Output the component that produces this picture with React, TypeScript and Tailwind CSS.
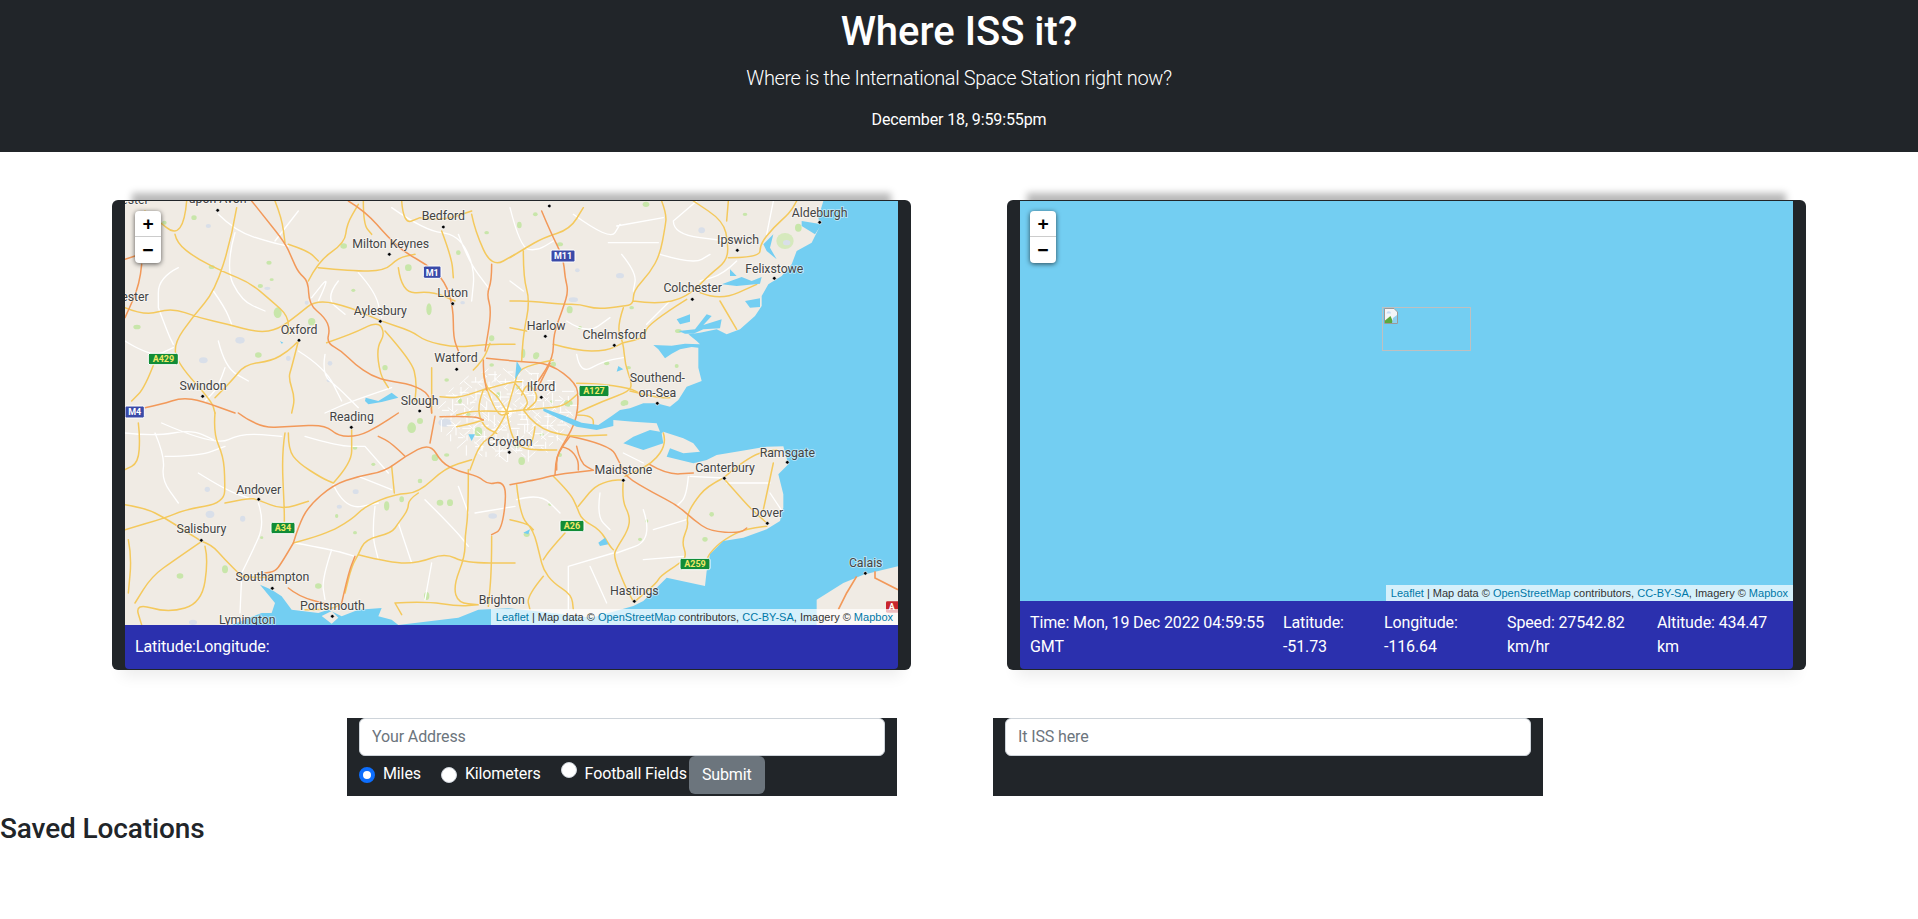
import React from 'react';

// Road and coast coordinates are in 3x map pixels, one list per map quadrant.
type Line = number[];

const yellow: Record<string, Line[]> = {
  q1: [
    [335, 20, 320, 110, 270, 270, 205, 345, 145, 430, 160, 490, 260, 600, 270, 636],
    [150, 100, 155, 125, 210, 170, 300, 215, 375, 245, 440, 300, 490, 345, 490, 400],
    [0, 320, 60, 345, 140, 320, 220, 350, 310, 370, 400, 395, 460, 385, 520, 340, 575, 295, 680, 320, 765, 360, 860, 390, 900, 420, 990, 440, 1080, 430, 1170, 430],
    [550, 240, 580, 180, 660, 125, 665, 70, 700, 10],
    [580, 200, 680, 210, 780, 210, 820, 170, 870, 160],
    [490, 130, 550, 150, 580, 180],
    [520, 420, 500, 500, 490, 530, 510, 590, 500, 636],
    [270, 590, 320, 540, 360, 490, 440, 480, 490, 450, 520, 420],
    [605, 425, 680, 400, 760, 360, 780, 400, 755, 440, 765, 520, 790, 560],
    [780, 390, 860, 480, 875, 540, 870, 600],
    [950, 90, 980, 170, 985, 230],
    [820, 200, 830, 280, 920, 270, 990, 300],
    [1040, 40, 1050, 90, 1100, 200, 1170, 160],
    [885, 50, 950, 60, 1040, 30],
    [185, 0, 180, 60, 150, 100, 100, 60, 60, 30],
    [90, 480, 60, 560, 20, 600],
    [920, 500, 920, 636],
    [450, 0, 470, 50, 480, 125],
    [830, 0, 835, 70, 885, 50],
    [715, 0, 715, 70, 740, 100],
  ],
  q2: [
    [455, 0, 470, 40, 465, 80, 450, 160, 420, 215, 370, 270, 370, 310, 340, 315, 260, 325, 210, 310, 160, 310, 60, 300, 0, 300],
    [40, 150, 40, 230, 60, 300, 40, 400, 35, 480],
    [0, 170, 40, 145, 100, 110, 180, 85, 220, 20],
    [370, 300, 440, 310, 530, 290, 600, 220, 650, 180, 655, 130, 640, 60, 550, 0],
    [655, 0, 650, 60],
    [655, 170, 750, 170, 750, 130, 790, 80, 840, 35, 860, 0],
    [570, 275, 630, 300, 740, 250],
    [630, 300, 680, 385],
    [530, 295, 410, 370, 405, 410, 340, 425],
    [340, 320, 320, 380, 340, 425, 345, 490, 365, 545, 360, 570, 280, 600, 200, 636],
    [130, 430, 200, 450, 290, 450, 340, 425],
    [0, 380, 50, 390],
    [360, 570, 440, 590, 480, 590],
  ],
  q3: [
    [270, 0, 265, 60, 295, 130, 300, 200, 298, 270, 180, 290, 120, 315, 0, 350],
    [0, 275, 60, 285, 120, 315, 190, 360, 230, 385],
    [300, 270, 370, 255, 400, 260, 470, 290, 550, 265],
    [480, 60, 470, 120, 478, 290, 478, 330],
    [490, 60, 490, 110, 520, 150, 590, 195, 625, 210],
    [625, 210, 680, 150, 680, 80, 680, 50],
    [230, 385, 260, 395, 300, 440, 350, 490],
    [230, 385, 150, 440, 80, 490, 30, 570],
    [240, 400, 250, 440, 230, 570, 130, 600, 30, 570, 50, 636],
    [10, 380, 20, 430, 10, 540],
    [505, 390, 600, 365, 680, 320, 720, 280, 810, 243, 880, 240, 960, 165, 1040, 140],
    [800, 160, 808, 240],
    [880, 240, 850, 260, 850, 290, 820, 330, 800, 360, 720, 380, 700, 425, 680, 460, 660, 540],
    [700, 425, 800, 450, 880, 450, 960, 420, 1020, 450, 1170, 450],
    [1030, 170, 1030, 300, 1020, 370, 1020, 430, 985, 520, 1000, 570, 1060, 575],
    [1100, 370, 1100, 470, 1090, 580],
    [810, 570, 900, 565, 1000, 580, 1060, 575],
    [810, 570, 830, 605],
    [350, 490, 400, 495, 440, 490],
    [40, 30, 45, 70, 40, 150, 0, 170],
    [540, 590, 620, 590, 650, 570],
  ],
  q4: [
    [640, 195, 590, 220, 550, 270, 530, 310, 535, 340, 515, 385, 530, 430, 510, 450, 450, 490, 440, 510, 375, 565],
    [640, 195, 680, 240, 720, 285, 770, 330],
    [790, 150, 775, 220, 760, 290],
    [640, 195, 720, 125, 800, 110],
    [340, 200, 335, 260, 360, 310, 355, 350, 320, 405, 310, 430, 345, 520, 370, 565],
    [20, 215, 30, 310, 70, 350, 90, 430, 100, 470, 130, 510, 185, 545, 190, 590],
    [165, 360, 120, 410, 100, 440],
    [130, 190, 180, 240, 200, 280, 215, 320, 270, 350, 300, 400, 310, 410],
    [340, 200, 270, 200, 205, 280],
    [460, 60, 470, 90, 430, 150, 345, 190],
    [0, 320, 50, 330, 70, 350],
    [100, 490, 50, 550, 60, 590],
    [770, 340, 710, 345, 640, 380, 600, 420, 590, 440],
  ],
  // London, from its own close-up
  lon: [
    [200, 215, 225, 130, 235, 90, 290, 70, 340, 60],
    [200, 215, 175, 170, 140, 145, 130, 100],
    [140, 145, 60, 175, 0, 170],
    [200, 215, 110, 210, 50, 225],
    [200, 215, 300, 205, 370, 200, 415, 160],
    [250, 210, 285, 260, 380, 290, 500, 285],
    [200, 215, 170, 280, 120, 310, 90, 390],
    [200, 215, 210, 280, 240, 325, 300, 330, 350, 330],
    [285, 260, 280, 300, 265, 320],
    [130, 240, 100, 250, 50, 260],
    [130, 150, 215, 125, 245, 125],
    [130, 150, 110, 200, 130, 260, 170, 280],
    [225, 130, 270, 180, 250, 210],
    [140, 145, 170, 230, 205, 220],
    [245, 165, 260, 120, 300, 175, 260, 210],
    [410, 130, 470, 130, 570, 145, 600, 160],
    [410, 225, 460, 225, 460, 265],
    [100, 90, 130, 60, 150, 10],
  ],
};

const orange: Record<string, Line[]> = {
  q1: [
    [380, 0, 420, 50, 480, 125, 500, 170, 520, 215, 550, 240, 552, 310, 600, 350, 615, 385, 605, 425, 650, 450, 690, 490, 740, 525, 790, 540, 860, 550, 915, 580, 920, 636],
    [670, 0, 720, 30, 790, 110, 840, 155, 905, 190, 960, 240, 985, 320, 985, 410, 1000, 450],
    [60, 620, 110, 610, 170, 590, 230, 600, 330, 636],
    [50, 190, 45, 250, 0, 350],
    [0, 175, 30, 165],
    [1100, 190, 1100, 240, 1085, 280, 1100, 330, 1080, 450],
  ],
  q2: [
    [95, 30, 120, 90, 160, 170, 165, 230, 175, 270, 160, 320, 130, 400, 130, 470, 85, 540],
  ],
  q3: [
    [340, 0, 400, 45, 500, 40, 600, 35, 640, 70, 700, 70, 760, 40, 820, 0],
    [505, 390, 520, 340, 550, 280, 625, 215, 700, 190, 780, 175, 840, 130, 915, 90, 950, 150, 1000, 175, 1060, 190, 1090, 215, 1130, 205, 1145, 240, 1130, 350, 1100, 365],
    [505, 390, 470, 450, 450, 475, 420, 480],
    [490, 525, 520, 550, 610, 575],
    [650, 570, 670, 480, 690, 430],
    [840, 130, 800, 90, 760, 70],
    [915, 90, 930, 10],
  ],
  q4: [
    [0, 215, 80, 200, 135, 185, 250, 172],
    [180, 70, 140, 120, 135, 185],
    [180, 70, 300, 95, 330, 150, 345, 190, 430, 240, 500, 275, 550, 320, 600, 355, 690, 360, 710, 345],
    [420, 155, 470, 185, 550, 180],
    [200, 100, 210, 150, 250, 172],
  ],
  lon: [
    [140, 55, 240, 65, 330, 70, 410, 130, 415, 180, 410, 230, 395, 270, 365, 320, 350, 350, 350, 390],
    [130, 60, 130, 100, 140, 150],
    [330, 70, 310, 110, 290, 150],
    [0, 230, 100, 228, 130, 240],
    [365, 320, 390, 325, 415, 360, 415, 390],
  ],
};

const white: Record<string, Line[]> = {
  q1: [
    [280, 40, 330, 90, 440, 125, 490, 135],
    [265, 270, 300, 320, 320, 370],
    [580, 300, 620, 215, 560, 290],
    [700, 215, 750, 270, 770, 350],
    [100, 320, 130, 400, 145, 430],
    [0, 420, 80, 470, 145, 440],
    [300, 500, 280, 560, 240, 600],
    [520, 450, 600, 500, 650, 600],
    [600, 460, 590, 520, 640, 560, 700, 620],
    [800, 20, 900, 90, 1000, 100, 1050, 200, 1040, 300],
    [520, 30, 450, 120],
    [1000, 100, 1030, 180, 1090, 260],
    [330, 95, 300, 200, 350, 300, 420, 330],
    [640, 240, 600, 290, 660, 340],
    [280, 420, 300, 500, 370, 540],
    [160, 200, 100, 230, 100, 320],
    [800, 560, 680, 600, 600, 636],
  ],
  q2: [
    [320, 75, 460, 50],
    [295, 125, 445, 125],
    [335, 160, 380, 215, 370, 270],
    [490, 60, 490, 100, 650, 120],
    [450, 160, 550, 190, 600, 160],
    [0, 20, 30, 140, 80, 150, 130, 120],
    [190, 40, 300, 120, 330, 70],
    [200, 460, 210, 520, 280, 480, 340, 470],
    [40, 270, 0, 240],
    [410, 370, 480, 300],
    [560, 0, 490, 60],
    [680, 180, 640, 220, 570, 240],
    [170, 360, 230, 400, 300, 350],
    [770, 100, 790, 0],
  ],
  q3: [
    [90, 60, 120, 130, 110, 200, 160, 270],
    [0, 60, 90, 70, 200, 50, 265, 80],
    [120, 130, 220, 130, 300, 100],
    [220, 180, 300, 230, 370, 255],
    [400, 270, 420, 330, 380, 420, 350, 480],
    [350, 490, 345, 600],
    [510, 390, 620, 410, 690, 430],
    [620, 410, 590, 500, 600, 560],
    [625, 215, 660, 290, 760, 270],
    [700, 190, 800, 230],
    [900, 260, 990, 350, 1030, 400],
    [820, 330, 860, 450],
    [920, 450, 900, 560],
    [720, 100, 790, 180],
    [1050, 300, 1170, 280],
    [110, 30, 270, 100, 350, 60, 470, 70],
    [540, 70, 640, 100, 720, 100],
    [750, 280, 740, 360, 760, 440],
    [1000, 220, 1030, 300],
  ],
  q4: [
    [535, 190, 530, 250, 500, 280],
    [640, 195, 540, 190],
    [400, 290, 430, 380, 320, 420],
    [530, 320, 430, 350],
    [175, 460, 310, 420],
    [175, 460, 175, 590],
    [240, 460, 290, 570],
    [20, 260, 90, 240, 150, 300],
    [650, 210, 780, 210],
    [820, 300, 780, 240],
    [400, 440, 520, 430],
    [270, 240, 260, 310, 300, 350],
    [340, 120, 400, 150],
  ],
  lon: [],
};

// London streets: a thin web spread evenly with the golden angle
const londonStreets = Array.from({ length: 230 }, (_, i) => {
  const a = i * 2.39996;
  const r = Math.sqrt(i / 230);
  const x = 200 + Math.cos(a) * r * 200;
  const y = 215 + Math.sin(a) * r * 135;
  const dir = i % 4 === 0 ? 0 : i % 4 === 1 ? 1.57 : i % 4 === 2 ? 0.7 : 2.4;
  const len = 16 + (i % 5) * 5;
  return `M${x.toFixed(0)} ${y.toFixed(0)}L${(x + Math.cos(dir) * len).toFixed(0)} ${(y + Math.sin(dir) * len).toFixed(0)}`;
}).join('');

const greens: [number, number, number, number][] = [
  [207, 50, 8, 7], [118, 65, 7, 6], [432, 185, 8, 6], [458, 335, 12, 16], [406, 255, 8, 6], [400, 462, 10, 8], [440, 236, 6, 4],
  [656, 135, 10, 8], [912, 325, 8, 18], [1100, 412, 8, 9], [1000, 155, 7, 7], [685, 268, 6, 5], [260, 198, 9, 6], [36, 378, 11, 7],
  [560, 362, 11, 11], [780, 500, 8, 8], [850, 200, 10, 10], [1085, 95, 7, 5],
  [1231, 40, 7, 6], [1183, 72, 7, 10], [1305, 130, 9, 6], [1563, 10, 10, 8], [1334, 326, 9, 11], [1520, 320, 7, 5],
  [1232, 465, 8, 10], [1285, 490, 8, 8], [1365, 380, 6, 5], [1660, 390, 10, 6], [2020, 80, 10, 12],
  [1860, 40, 7, 5], [1655, 495, 6, 6], [1510, 500, 8, 5], [1500, 605, 10, 8],
  [860, 680, 13, 16], [885, 660, 9, 9], [930, 770, 10, 10], [690, 740, 7, 6], [745, 790, 6, 5],
  [785, 915, 8, 14], [830, 895, 7, 9], [885, 840, 7, 7], [945, 905, 10, 9], [975, 905, 9, 10], [300, 1105, 9, 12],
  [165, 1125, 10, 8], [690, 995, 6, 5], [905, 1185, 8, 12], [580, 1155, 10, 8], [410, 1010, 5, 4], [635, 945, 5, 6],
  [1190, 780, 10, 12], [1275, 910, 5, 5], [1760, 940, 7, 7], [1740, 1015, 8, 7],
  [1565, 960, 5, 5], [1205, 1000, 9, 8], [1545, 1015, 6, 5], [1805, 1035, 4, 4], [1980, 1005, 6, 4],
  // London
  [1120, 582, 8, 8], [1060, 692, 12, 14], [1195, 457, 6, 14], [1235, 462, 8, 8], [1330, 607, 13, 10], [1280, 602, 5, 4],
  [965, 537, 7, 5], [1100, 492, 7, 5], [1445, 487, 8, 6], [1495, 607, 8, 8], [1305, 762, 6, 6], [965, 762, 8, 5],
  [1030, 640, 7, 5], [1180, 560, 6, 6], [1250, 700, 6, 5], [1005, 600, 6, 8], [1175, 735, 7, 6],
];

const greys: [number, number, number, number][] = [
  [250, 75, 8, 6], [345, 418, 14, 10], [235, 478, 13, 9], [427, 262, 9, 5], [1013, 305, 7, 5], [615, 487, 7, 7], [490, 472, 7, 8],
  [545, 305, 6, 6], [612, 538, 7, 6], [1730, 88, 10, 9], [1485, 224, 12, 8], [1345, 296, 14, 7], [1357, 208, 7, 6],
  [255, 940, 13, 11], [353, 953, 8, 9], [247, 865, 8, 8], [692, 872, 9, 7], [643, 917, 8, 6], [1103, 945, 13, 8], [960, 665, 20, 12], [204, 1264, 12, 8],
];

const labels: [string, number, number][] = [
  ['Bedford', 955, 58], ['Milton Keynes', 797, 142], ['Luton', 983, 288], ['Aylesbury', 766, 343], ['Oxford', 522, 398],
  ['Watford', 993, 484], ['Swindon', 234, 567], ['Slough', 884, 612], ['ester', 30, 300], ['upon Avon', 278, 6], ['ester', 30, 8],
  ['Ipswich', 1839, 128], ['Aldeburgh', 2084, 47], ['Felixstowe', 1948, 215], ['Colchester', 1703, 274], ['Harlow', 1263, 388],
  ['Chelmsford', 1468, 414], ['Southend-', 1597, 542], ['on-Sea', 1597, 587], ['Ilford', 1248, 569],
  ['Reading', 680, 660], ['Andover', 401, 879], ['Salisbury', 229, 997], ['Southampton', 442, 1141], ['Portsmouth', 622, 1226],
  ['Lymington', 367, 1268], ['Brighton', 1130, 1210], ['Croydon', 1155, 734],
  ['Maidstone', 1495, 818], ['Canterbury', 1800, 814], ['Ramsgate', 1987, 768], ['Dover', 1927, 948], ['Calais', 2222, 1097], ['Hastings', 1528, 1182],
];

const dots: [number, number][] = [
  [278, 28], [955, 78], [793, 160], [983, 308], [766, 361], [522, 418], [995, 505], [233, 586], [884, 630],
  [1273, 15], [1837, 148], [2084, 64], [1948, 232], [1702, 295], [1261, 406], [1468, 433], [1597, 607], [1249, 589],
  [679, 679], [401, 895], [229, 1018], [442, 1162], [622, 1246], [1153, 754], [1495, 838], [1798, 832], [1987, 784], [1927, 967], [2221, 1117], [1528, 1201],
];

const badges: [string, number, number, number, number, string][] = [
  ['A429', 70, 457, 90, 34, '#118c37'], ['M1', 895, 195, 53, 37, '#3a4aa8'], ['M4', 0, 615, 58, 36, '#3a4aa8'],
  ['M11', 1278, 147, 72, 36, '#3a4aa8'], ['A127', 1362, 553, 90, 34, '#118c37'], ['A34', 438, 964, 72, 34, '#118c37'],
  ['A26', 1305, 958, 72, 34, '#118c37'], ['A259', 1665, 1072, 90, 34, '#118c37'],
];

// Curves through the midpoints so that roads don't look like polylines
const toPath = (l: Line) => {
  let d = `M${l[0]} ${l[1]}`;
  for (let i = 2; i < l.length - 2; i += 2) {
    d += `Q${l[i]} ${l[i + 1]} ${(l[i] + l[i + 2]) / 2} ${(l[i + 1] + l[i + 3]) / 2}`;
  }
  return d + `L${l[l.length - 2]} ${l[l.length - 1]}`;
};

const Quadrant = ({ name, x, y }: { name: string; x: number; y: number }) => (
  <g transform={`translate(${x} ${y})`} fill="none" strokeLinejoin="round" strokeLinecap="round">
    <path d={white[name].map(toPath).join('')} stroke="#ffffff" strokeWidth="4" />
    <path d={yellow[name].map(toPath).join('')} stroke="#f4c95d" strokeWidth="4.5" />
    <path d={orange[name].map(toPath).join('')} stroke="#f2995a" strokeWidth="4.5" />
  </g>
);

const EnglandMap = () => (
  <svg viewBox="0 0 2319 1272" className="block h-[424px] w-[773px]">
    <rect width="2319" height="1272" fill="#f0ebe4" />
    <ellipse cx="1980" cy="120" rx="26" ry="24" fill="#d6e9bd" />
    {greens.map(([x, y, rx, ry], i) => (
      <ellipse key={i} cx={x} cy={y} rx={rx} ry={ry} fill="#c8e6aa" />
    ))}
    {greys.map(([x, y, rx, ry], i) => (
      <ellipse key={i} cx={x} cy={y} rx={rx} ry={ry} fill="#d9dfe9" />
    ))}
    <ellipse cx="1985" cy="125" rx="11" ry="8" fill="#d9dfe9" />
    <g transform="translate(945 417)" fill="none">
      <path d={londonStreets} stroke="#ffffff" strokeWidth="3" />
      <ellipse cx="200" cy="215" rx="18" ry="15" fill="#ffffff" />
    </g>
    <Quadrant name="q1" x={0} y={0} />
    <Quadrant name="q2" x={1155} y={0} />
    <Quadrant name="q3" x={0} y={636} />
    <Quadrant name="q4" x={1155} y={636} />
    <Quadrant name="lon" x={945} y={417} />

    {/* sea, with the Thames and the Medway */}
    <path
      fill="#73cef2"
      d="M2095 0L2080 50L2085 75L2070 105L2060 125L2015 150L2000 190L1970 225L1930 250L1910 285L1910 315L1890 345L1845 385L1805 400L1775 385L1725 395L1690 400L1715 420L1725 430L1680 428L1640 434L1585 432L1600 445L1620 472L1640 458L1665 445L1700 438L1720 440L1720 500L1730 540L1685 557L1660 597L1635 617L1595 607L1555 607L1515 622L1485 627L1460 645L1420 672L1370 665L1320 645L1255 622L1255 630L1310 657L1355 677L1415 687L1465 675L1465 657L1525 662L1595 667L1605 692L1575 687L1525 707L1495 727L1555 747L1615 727L1610 697L1615 692L1675 712L1705 727L1725 752L1675 757L1635 742L1625 767L1705 787L1745 777L1775 762L1865 747L1925 737L1975 736L1990 790L1960 820L1975 880L1975 920L1965 960L1925 985L1855 1010L1795 1020L1755 1060L1745 1110L1740 1155L1625 1130L1595 1160L1555 1200L1525 1215L1400 1250L1250 1232L1150 1222L1060 1226L1000 1250L820 1272L2319 1272L2319 0Z"
    />
    <path
      fill="#73cef2"
      d="M1655 355L1695 340L1695 362L1665 370ZM1660 390L1710 385L1745 340L1760 345L1735 372L1790 355L1785 382L1735 385L1705 398L1680 398ZM1790 250L1850 228L1880 240L1910 228L1905 248L1835 255ZM1815 205L1835 225L1815 225ZM1915 130L1945 100L1935 140L1955 175L1925 150ZM1860 300L1905 292L1905 318L1875 320ZM2030 60L2090 70L2070 100L2030 75Z"
    />
    {/* south coast */}
    <path
      fill="#73cef2"
      d="M320 1272L410 1236L440 1236L450 1206L405 1151L440 1166L470 1186L500 1226L580 1236L610 1226L650 1246L700 1226L770 1221L760 1246L800 1256L820 1272Z"
    />
    <path fill="#f0ebe4" d="M590 1245L620 1230L640 1250L620 1268Z" />
    {/* France */}
    <path fill="#f0ebe4" d="M2075 1272L2075 1196L2155 1146L2215 1121L2275 1106L2319 1096L2319 1272Z" />
    <path d="M2195 1126L2165 1176L2140 1226M2250 1111L2250 1131L2319 1166" fill="none" stroke="#f2995a" strokeWidth="5" />
    {/* inland water */}
    <path
      fill="#73cef2"
      d="M720 600L722 590L760 600L800 575L820 590L770 603L730 610ZM1175 480L1190 505L1170 535ZM1040 720L1030 700L1050 700ZM465 420L475 425L470 428ZM1480 495L1495 505L1475 512ZM1420 1025L1440 1010L1450 1030L1425 1035ZM1195 995L1215 985L1210 1000Z"
    />

    {labels.map(([text, x, y]) => (
      <text
        key={text + x}
        x={x}
        y={y}
        textAnchor="middle"
        fontFamily="Roboto, sans-serif"
        fontSize="37"
        fill="#444444"
        stroke="#ffffff"
        strokeOpacity="0.55"
        strokeWidth="5"
        paintOrder="stroke"
      >
        {text}
      </text>
    ))}
    {dots.map(([x, y], i) => (
      <circle key={i} cx={x} cy={y} r="5.5" fill="#000000" stroke="#ffffff" strokeWidth="2" />
    ))}
    {badges.map(([text, x, y, w, h, color]) => (
      <g key={text}>
        <rect x={x} y={y} width={w} height={h} rx="5" fill={color} stroke="#ffffff" strokeWidth="3" />
        <text
          x={x + w / 2}
          y={y + h / 2 + 10}
          textAnchor="middle"
          fontFamily="Roboto, sans-serif"
          fontWeight="700"
          fontSize="27"
          fill={color === '#118c37' ? '#f0e868' : '#ffffff'}
        >
          {text}
        </text>
      </g>
    ))}
    <rect x="2283" y="1201" width="40" height="34" rx="4" fill="#c9252d" />
    <text x="2300" y="1228" textAnchor="middle" fontFamily="Roboto, sans-serif" fontWeight="700" fontSize="27" fill="#ffffff">
      A
    </text>
  </svg>
);

const ZoomControl = () => (
  <div className="absolute top-[10px] left-[10px] w-[26px] overflow-hidden rounded-[4px] bg-white font-['DejaVu_Sans_Mono',monospace] text-[18px] leading-[26px] font-bold text-black shadow-[0_1px_5px_rgba(0,0,0,0.65)]">
    <div className="h-[26px] border-b border-[#cccccc] text-center">+</div>
    <div className="h-[26px] text-center">−</div>
  </div>
);

const Attribution = () => (
  <div className="absolute right-0 bottom-0 bg-white/70 px-[5px] font-['Liberation_Sans',sans-serif] text-[11px] leading-[16px] tracking-normal text-[#333333]">
    <span className="text-[#0078a8]">Leaflet</span> | Map data © <span className="text-[#0078a8]">OpenStreetMap</span> contributors,{' '}
    <span className="text-[#0078a8]">CC-BY-SA</span>, Imagery © <span className="text-[#0078a8]">Mapbox</span>
  </div>
);

const MapCard = ({ children, bar }: { children: React.ReactNode; bar: React.ReactNode }) => (
  <div className="h-[470px] w-[799px] rounded-[6px] bg-[#212529] px-[13px] py-px shadow-[0_-27px_7px_-20px_rgba(0,0,0,0.28),0_16px_14px_-10px_rgba(0,0,0,0.08)]">
    <div className="flex h-full flex-col overflow-hidden rounded-b-[4px]">
      <div className="relative min-h-0 flex-1 overflow-hidden bg-[#73cef2]">
        {children}
        <ZoomControl />
        <Attribution />
      </div>
      <div className="bg-[#2b30ae] p-[10px] text-white">{bar}</div>
    </div>
  </div>
);

const Radio = ({ checked, raised }: { checked?: boolean; raised?: boolean }) => (
  <input
    type="radio"
    name="unit"
    defaultChecked={checked}
    className={`h-4 w-4 appearance-none rounded-full border border-[#ced4da] bg-white checked:border-[4px] checked:border-[#0d6efd] ${raised ? 'mb-[10px]' : ''}`}
  />
);

const TextInput = ({ placeholder }: { placeholder: string }) => (
  <input
    placeholder={placeholder}
    className="block h-[38px] w-[526px] rounded-[6px] border border-[#ced4da] bg-white px-3 pb-[2px] text-base text-[#212529] placeholder:text-[#6c757d]"
  />
);

export default function App() {
  return (
    <div className="min-h-[919px] bg-white font-['Roboto',sans-serif] text-base tracking-[-0.12px] text-[#212529]">
      <header className="h-[152px] bg-[#212529] pt-[8px] text-center text-white">
        <h1 className="text-[40px] leading-[48px] font-medium tracking-normal">Where ISS it?</h1>
        <p className="mt-[7px] text-[20px] leading-[30px] font-light tracking-[-0.39px]">Where is the International Space Station right now?</p>
        <p className="mt-[15px] leading-[24px]">December 18, 9:59:55pm</p>
      </header>

      <main className="flex justify-between px-[112px] pt-[48px]">
        <MapCard bar={<p className="leading-[24px]">Latitude:Longitude:</p>}>
          <EnglandMap />
        </MapCard>

        <MapCard
          bar={
            <div className="flex leading-[24px]">
              <p className="w-[253px] pr-2">Time: Mon, 19 Dec 2022 04:59:55 GMT</p>
              <p className="w-[101px] pr-2">Latitude: -51.73</p>
              <p className="w-[123px] pr-2">Longitude: -116.64</p>
              <p className="w-[150px] pr-2">Speed: 27542.82 km/hr</p>
              <p className="w-[116px]">Altitude: 434.47 km</p>
            </div>
          }
        >
          {/* ISS marker whose picture failed to load */}
          <div className="absolute top-[106px] left-[362px] h-[44px] w-[89px] border border-[#c0c0c0]">
            <svg viewBox="0 0 16 16" className="h-4 w-4">
              <path d="M1.5 0.5H11L14.5 4V15.5H1.5Z" fill="#f4f6f8" stroke="#9a9a9a" />
              <path d="M2 15V12.5L7.5 8L10.5 15Z" fill="#5ba83c" />
              <path d="M9 15L10 10L14 7V15Z" fill="#8ed0f0" />
              <path d="M3.5 5.5A2 2 0 0 1 8 5.5Z" fill="#c5dcf5" />
            </svg>
          </div>
        </MapCard>
      </main>

      <section className="mt-[48px] ml-[347px] flex gap-[96px]">
        <form className="h-[78px] w-[550px] bg-[#212529] px-3 text-white">
          <TextInput placeholder="Your Address" />
          <div className="flex h-[38px] items-center">
            <Radio checked />
            <label className="mr-[20px] ml-2 pb-[2px]">Miles</label>
            <Radio />
            <label className="mr-[20px] ml-2 pb-[2px]">Kilometers</label>
            <Radio raised />
            <label className="mr-[2px] ml-2 pb-[2px]">Football Fields</label>
            <button type="button" className="h-[38px] w-[76px] rounded-[6px] bg-[#6c757d] text-white">
              Submit
            </button>
          </div>
        </form>
        <form className="h-[78px] w-[550px] bg-[#212529] px-3">
          <TextInput placeholder="It ISS here" />
        </form>
      </section>

      <h3 className="mt-[16px] text-[28px] leading-[34px] font-medium">Saved Locations</h3>
    </div>
  );
}
